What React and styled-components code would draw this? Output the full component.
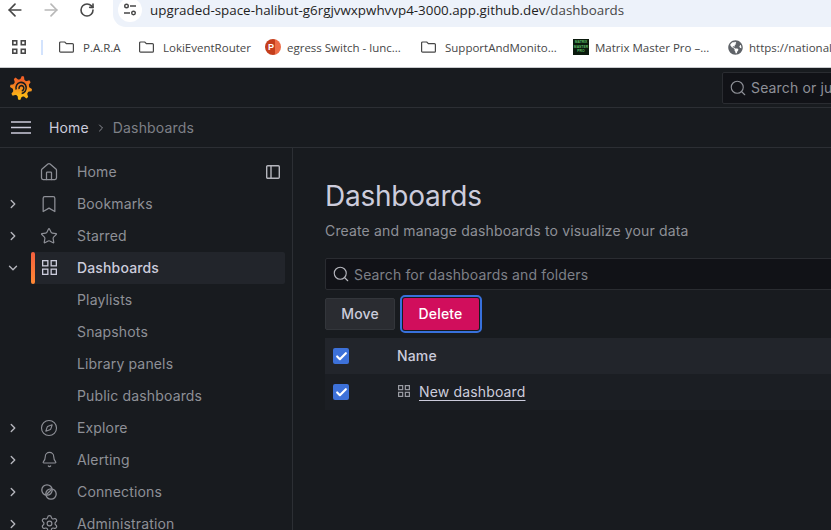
import React from 'react';
import styled, { createGlobalStyle } from 'styled-components';
import {
  ArrowLeft, ArrowRight, RotateCw, House, Bookmark, Star, Compass, Bell, Settings,
  ChevronRight, ChevronDown, Search, Check,
} from 'lucide-react';
import { FaGlobeAmericas } from 'react-icons/fa';

const GlobalStyle = createGlobalStyle`
  html, body { margin: 0; padding: 0; height: 100%; overflow: hidden; background: #181b1f; }
  * { box-sizing: border-box; }
  svg { flex: none; }
`;

const Page = styled.div`
  width: 831px;
  height: 530px;
  overflow: hidden;
  display: flex;
  flex-direction: column;
  font-family: Inter, "Noto Sans", sans-serif;
  letter-spacing: 0.15px;
`;

/* browser chrome */
const UrlRow = styled.div`
  height: 27px;
  flex: none;
  display: flex;
  background: #fff;
  letter-spacing: 0;
`;
const NavButtons = styled.div`
  width: 113px;
  flex: none;
  display: flex;
  align-items: center;
  padding: 0 0 7px 5px;
  gap: 16px;
  color: #474747;
`;
const ReloadWrap = styled.span`
  display: flex;
  margin-left: 2px;
`;
const UrlField = styled.div`
  flex: 1;
  display: flex;
  align-items: flex-start;
  background: #edf2fa;
  border-bottom-left-radius: 13px;
  padding-left: 5px;
  white-space: nowrap;
  overflow: hidden;
`;
const SiteInfo = styled.div`
  width: 24px;
  height: 24px;
  margin-top: -2px;
  border-radius: 50%;
  background: #fff;
  display: flex;
  align-items: center;
  justify-content: center;
`;
const UrlText = styled.span`
  margin-left: 8px;
  font-family: "Open Sans", sans-serif;
  font-size: 13.38px;
  line-height: 20px;
  color: #1f1f1f;
`;
const UrlPath = styled.span`
  color: #474747;
`;
const BookmarkBar = styled.div`
  height: 41px;
  flex: none;
  display: flex;
  align-items: center;
  background: #fff;
  border-bottom: 1px solid #c9cbce;
  padding-left: 12px;
  white-space: nowrap;
  overflow: hidden;
  letter-spacing: 0;
`;
const Divider = styled.div`
  width: 2px;
  height: 15px;
  flex: none;
  margin: 0 16px 0 15px;
  background: #d3e3fd;
`;
const BookmarkItem = styled.div`
  display: flex;
  align-items: center;
  flex: none;
  width: ${(p) => p.$width}px;
  gap: ${(p) => p.$gap}px;
  font-family: "Open Sans", sans-serif;
  font-size: 11.5px;
  color: #474747;
`;
const PptIcon = styled.div`
  width: 16px;
  height: 16px;
  flex: none;
  border-radius: 50%;
  background: linear-gradient(90deg, #c43e1c 60%, #ed6c47 60%);
  color: #fff;
  font: 700 9px/16px "Liberation Sans", sans-serif;
  padding-left: 3px;
`;
const MatrixIcon = styled.div`
  width: 16px;
  height: 16px;
  flex: none;
  background: #0b1a0d;
  color: #5fbf6a;
  font: 700 3.4px/4.6px "Liberation Sans", sans-serif;
  text-align: center;
  white-space: normal;
  padding-top: 1px;
  overflow: hidden;
`;

/* grafana header */
const TopBar = styled.div`
  height: 40px;
  flex: none;
  display: flex;
  align-items: center;
  justify-content: space-between;
  padding: 0 0 0 10px;
  background: #181b1f;
  border-bottom: 1px solid #2c2f34;
`;
const TopSearch = styled.div`
  width: 160px;
  height: 32px;
  margin-right: -51px;
  display: flex;
  align-items: center;
  gap: 4px;
  padding-left: 6px;
  background: #111217;
  border: 1px solid #2a2c31;
  border-radius: 2px;
  color: #8e9097;
  font-size: 14px;
  white-space: nowrap;
  overflow: hidden;
`;
const CrumbBar = styled.div`
  height: 40px;
  flex: none;
  display: flex;
  align-items: center;
  padding-left: 11px;
  background: #181b1f;
  border-bottom: 1px solid #2c2f34;
  font-size: 14px;
  color: #7e8087;
`;
const CrumbHome = styled.span`
  margin-left: 18px;
  color: #ccccdc;
`;
const CrumbSep = styled.span`
  display: flex;
  margin: 0 6px;
  color: #8e9097;
`;

/* sidebar */
const Body = styled.div`
  flex: 1;
  display: flex;
  min-height: 0;
  background: #181b1f;
`;
const Sidebar = styled.nav`
  width: 293px;
  flex: none;
  padding: 8px 7px 0 0;
  border-right: 1px solid #2c2f34;
  position: relative;
  overflow: hidden;
`;
const DockIcon = styled.svg`
  position: absolute;
  top: 17px;
  right: 12px;
`;
const NavRow = styled.div`
  height: 32px;
  display: flex;
  align-items: center;
  position: relative;
  margin-left: 31px;
  border-radius: 2px;
  background: ${(p) => (p.$active ? '#22252b' : 'transparent')};
  color: ${(p) => (p.$active ? '#ccccdc' : '#8e9097')};
  font-size: 14px;
  font-weight: ${(p) => (p.$active ? 500 : 400)};
  ${(p) => p.$active && `
    &::before {
      content: '';
      position: absolute;
      left: 0;
      top: 0;
      bottom: 0;
      width: 4px;
      border-radius: 2px;
      background: linear-gradient(180deg, #f55f3e, #ff8833);
    }
  `}
`;
const Caret = styled.span`
  position: absolute;
  left: -25px;
  top: 9px;
  display: flex;
  color: #b5b6bd;
`;
const NavIcon = styled.span`
  width: 18px;
  margin-left: 9px;
  margin-bottom: 1px;
  display: flex;
  justify-content: center;
  color: ${(p) => (p.$active ? '#ccccdc' : '#8e9097')};
`;
const NavLabel = styled.span`
  margin-left: ${(p) => (p.$sub ? 46 : 19)}px;
  margin-bottom: 2px;
`;

/* content */
const Main = styled.main`
  flex: 1;
  min-width: 0;
  padding: 31px 0 0 32px;
`;
const Title = styled.h1`
  margin: 0;
  font-size: 28px;
  font-weight: 400;
  line-height: 34px;
  letter-spacing: -0.25px;
  color: #ccccdc;
`;
const Subtitle = styled.p`
  margin: 8px 0 0;
  font-size: 14px;
  line-height: 20px;
  color: #8e9097;
`;
const SearchBox = styled.div`
  height: 32px;
  margin-top: 17px;
  display: flex;
  align-items: center;
  gap: 4px;
  padding-left: 6px;
  margin-right: -20px;
  background: #111217;
  border: 1px solid #2a2c31;
  border-radius: 2px;
  color: #7e8087;
  font-size: 14px;
`;
const Actions = styled.div`
  margin-top: 8px;
  display: flex;
  gap: 8px;
`;
const MoveButton = styled.div`
  width: 70px;
  height: 32px;
  display: flex;
  align-items: center;
  justify-content: center;
  padding-bottom: 2px;
  background: #2a2c31;
  border: 1px solid #33363b;
  border-radius: 2px;
  color: #ccccdc;
  font-size: 14px;
  font-weight: 500;
`;
const DeleteButton = styled.div`
  width: 76px;
  height: 32px;
  display: flex;
  align-items: center;
  justify-content: center;
  padding: 0 1px 2px 0;
  background: #d10e5c;
  border-radius: 2px;
  color: #fff;
  font-size: 14px;
  font-weight: 500;
  outline: 2px solid #3871dc;
  outline-offset: 1px;
`;
const Table = styled.div`
  margin: 8px -20px 0 0;
`;
const TableRow = styled.div`
  height: 36px;
  display: flex;
  align-items: center;
  padding-left: 8px;
  background: ${(p) => (p.$head ? '#22252b' : '#1b1e23')};
  color: #ccccdc;
  font-size: 14px;
  font-weight: ${(p) => (p.$head ? 500 : 400)};
`;
const CheckBox = styled.span`
  width: 16px;
  height: 16px;
  flex: none;
  display: flex;
  align-items: center;
  justify-content: center;
  background: #3d71d9;
  border-radius: 2px;
  color: #fff;
`;
const NameCell = styled.span`
  margin: 0 0 2px 48px;
  display: flex;
  align-items: center;
`;
const DashIcon = styled.span`
  display: flex;
  margin: 0 9px 0 1px;
`;
const DashLink = styled.span`
  text-decoration: underline;
  text-underline-offset: 3px;
`;

const GridIcon = ({ size = 18, gap = 2, sw = 1.4, color = 'currentColor' }) => {
  const cell = (size - gap - sw * 2) / 2;
  const a = sw / 2;
  const b = a + cell + sw + gap;
  return (
    <svg width={size} height={size} viewBox={`0 0 ${size} ${size}`} fill="none" stroke={color} strokeWidth={sw}>
      <rect x={a} y={a} width={cell} height={cell} />
      <rect x={b} y={a} width={cell} height={cell} />
      <rect x={a} y={b} width={cell} height={cell} />
      <rect x={b} y={b} width={cell} height={cell} />
    </svg>
  );
};

const FolderIcon = () => (
  <svg width="16" height="16" viewBox="0 0 16 16" fill="none" stroke="#474747" strokeWidth="1.2">
    <path d="M1.6 3h4.2l1.6 1.6h6a1 1 0 0 1 1 1v6.6a1 1 0 0 1-1 1H1.6a1 1 0 0 1-1-1V4a1 1 0 0 1 1-1z" />
  </svg>
);

const HamburgerIcon = () => (
  <svg width="20" height="13" viewBox="0 0 20 13" stroke="#ccccdc" strokeWidth="1.6">
    <path d="M0 1h20M0 6.5h20M0 12h20" />
  </svg>
);

const ConnectionsIcon = () => (
  <svg width="16" height="16" viewBox="0 0 16 16" fill="none" stroke="currentColor" strokeWidth="1.3">
    <circle cx="6" cy="6" r="5.2" />
    <circle cx="10" cy="10" r="5.2" />
    <path d="M5.5 10.5l5-5" />
  </svg>
);

const TuneIcon = () => (
  <svg width="16" height="16" viewBox="0 0 16 16" fill="none" stroke="#474747" strokeWidth="1.4">
    <circle cx="4.5" cy="4" r="1.8" />
    <path d="M8 4h6M2 11h6" />
    <circle cx="11.5" cy="11" r="1.8" />
  </svg>
);

const GrafanaLogo = () => {
  const teeth = Array.from({ length: 8 }, (_, i) => {
    const a = (i * 45 - 80) * (Math.PI / 180);
    const pt = (r, d) => `${12 + Math.cos(a + d) * r} ${12 + Math.sin(a + d) * r}`;
    return `M${pt(8, -0.32)}L${pt(12, -0.1)}L${pt(12, 0.1)}L${pt(8, 0.32)}Z`;
  }).join('');
  return (
    <svg width="22" height="24" viewBox="0 0 24 24" preserveAspectRatio="none">
      <defs>
        <linearGradient id="gf" x1="0" y1="1" x2="0" y2="0">
          <stop offset="0" stopColor="#fcc014" />
          <stop offset="1" stopColor="#f05a28" />
        </linearGradient>
      </defs>
      <path d={teeth} fill="url(#gf)" />
      <circle cx="12" cy="12" r="9" fill="url(#gf)" />
      <path d="M6.7 13.5a5.6 5.6 0 1 1 6 4" fill="none" stroke="#181b1f" strokeWidth="1.7" />
      <path d="M10 13a2.6 2.6 0 1 1 2.8 1.8" fill="none" stroke="#181b1f" strokeWidth="1.6" />
    </svg>
  );
};

const navItems = [
  { label: 'Home', icon: <House size={20} strokeWidth={1.5} /> },
  { label: 'Bookmarks', caret: 'right', icon: <Bookmark size={20} strokeWidth={1.5} /> },
  { label: 'Starred', caret: 'right', icon: <Star size={18} strokeWidth={1.6} /> },
  { label: 'Dashboards', caret: 'down', active: true, icon: <GridIcon size={15} gap={2} sw={1.3} /> },
  { label: 'Playlists', sub: true },
  { label: 'Snapshots', sub: true },
  { label: 'Library panels', sub: true },
  { label: 'Public dashboards', sub: true },
  { label: 'Explore', caret: 'right', icon: <Compass size={18} strokeWidth={1.5} /> },
  { label: 'Alerting', caret: 'right', icon: <Bell size={17} strokeWidth={1.6} /> },
  { label: 'Connections', caret: 'right', icon: <ConnectionsIcon /> },
  { label: 'Administration', caret: 'right', icon: <Settings size={19} strokeWidth={1.5} /> },
];

const bookmarks = [
  { label: 'P.A.R.A', width: 80, gap: 8, icon: <FolderIcon /> },
  { label: 'LokiEventRouter', width: 126, gap: 8, icon: <FolderIcon /> },
  { label: 'egress Switch - lunc...', width: 156, gap: 6, icon: <PptIcon>P</PptIcon> },
  { label: 'SupportAndMonito...', width: 152, gap: 8, icon: <FolderIcon /> },
  { label: 'Matrix Master Pro –...', width: 155, gap: 6, icon: <MatrixIcon>MATRIX MASTER PRO</MatrixIcon> },
  { label: 'https://national', width: 120, gap: 6, icon: <FaGlobeAmericas size={15} color="#5f6368" /> },
];

export default function App() {
  return (
    <Page>
      <GlobalStyle />
      <UrlRow>
        <NavButtons>
          <ArrowLeft size={20} />
          <ArrowRight size={20} color="#b8b8b8" />
          <ReloadWrap><RotateCw size={16} strokeWidth={2.4} /></ReloadWrap>
        </NavButtons>
        <UrlField>
          <SiteInfo><TuneIcon /></SiteInfo>
          <UrlText>upgraded-space-halibut-g6rgjvwxpwhvvp4-3000.app.github.dev<UrlPath>/dashboards</UrlPath></UrlText>
        </UrlField>
      </UrlRow>
      <BookmarkBar>
        <GridIcon size={14} gap={3} sw={1.6} color="#474747" />
        <Divider />
        {bookmarks.map((b) => (
          <BookmarkItem key={b.label} $width={b.width} $gap={b.gap}>{b.icon}{b.label}</BookmarkItem>
        ))}
      </BookmarkBar>
      <TopBar>
        <GrafanaLogo />
        <TopSearch><Search size={18} strokeWidth={1.5} />Search or ju</TopSearch>
      </TopBar>
      <CrumbBar>
        <HamburgerIcon />
        <CrumbHome>Home</CrumbHome>
        <CrumbSep><ChevronRight size={12} /></CrumbSep>
        Dashboards
      </CrumbBar>
      <Body>
        <Sidebar>
          <DockIcon width="14" height="14" viewBox="0 0 14 14" fill="none" stroke="#b5b6bd" strokeWidth="1.4">
            <rect x="0.7" y="0.7" width="12.6" height="12.6" rx="1" />
            <path d="M5 1v12" />
          </DockIcon>
          {navItems.map((item) => (
            <NavRow key={item.label} $active={item.active}>
              {item.caret && (
                <Caret>
                  {item.caret === 'down' ? <ChevronDown size={14} strokeWidth={2.4} /> : <ChevronRight size={14} strokeWidth={2.4} />}
                </Caret>
              )}
              {item.icon && <NavIcon $active={item.active}>{item.icon}</NavIcon>}
              <NavLabel $sub={item.sub}>{item.label}</NavLabel>
            </NavRow>
          ))}
        </Sidebar>
        <Main>
          <Title>Dashboards</Title>
          <Subtitle>Create and manage dashboards to visualize your data</Subtitle>
          <SearchBox><Search size={18} strokeWidth={1.5} color="#b5b6bd" />Search for dashboards and folders</SearchBox>
          <Actions>
            <MoveButton>Move</MoveButton>
            <DeleteButton>Delete</DeleteButton>
          </Actions>
          <Table>
            <TableRow $head>
              <CheckBox><Check size={13} strokeWidth={4} /></CheckBox>
              <NameCell>Name</NameCell>
            </TableRow>
            <TableRow>
              <CheckBox><Check size={13} strokeWidth={4} /></CheckBox>
              <NameCell>
                <DashIcon><GridIcon size={12} gap={1.5} sw={1.2} color="#9a9ca3" /></DashIcon>
                <DashLink>New dashboard</DashLink>
              </NameCell>
            </TableRow>
          </Table>
        </Main>
      </Body>
    </Page>
  );
}
